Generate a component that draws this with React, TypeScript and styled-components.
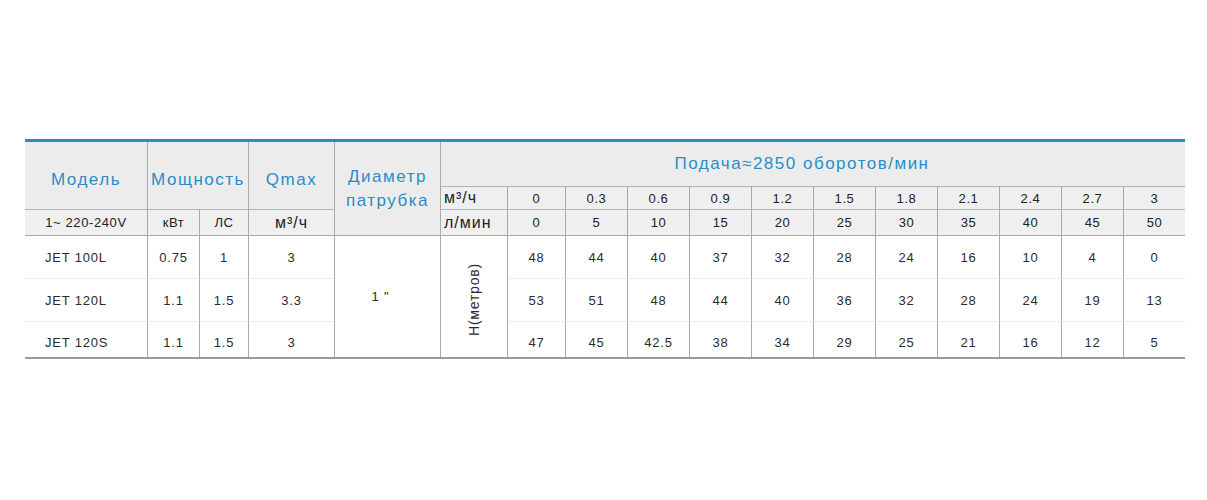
import styled, { createGlobalStyle } from "styled-components"

const GlobalStyle = createGlobalStyle`
  html, body {
    margin: 0;
    padding: 0;
    background: #ffffff;
  }
  body {
    font-family: "Liberation Sans", Arial, sans-serif;
  }
`

const flowM3 = ["0", "0.3", "0.6", "0.9", "1.2", "1.5", "1.8", "2.1", "2.4", "2.7", "3"]
const flowL = ["0", "5", "10", "15", "20", "25", "30", "35", "40", "45", "50"]

const pumps = [
  { model: "JET 100L", kw: "0.75", hp: "1", qmax: "3", head: ["48", "44", "40", "37", "32", "28", "24", "16", "10", "4", "0"] },
  { model: "JET 120L", kw: "1.1", hp: "1.5", qmax: "3.3", head: ["53", "51", "48", "44", "40", "36", "32", "28", "24", "19", "13"] },
  { model: "JET 120S", kw: "1.1", hp: "1.5", qmax: "3", head: ["47", "45", "42.5", "38", "34", "29", "25", "21", "16", "12", "5"] },
]

const App = () => {
  return (
    <Page>
      <GlobalStyle />
      <Table>
        {/* header block */}
        <HeadCell $col="1" $row="1 / 3" $first $pad>Модель</HeadCell>
        <HeadCell $col="2 / 4" $row="1 / 3" $pad>Мощность</HeadCell>
        <HeadCell $col="4" $row="1 / 3" $pad>Qmax</HeadCell>
        <HeadCell $col="5" $row="1 / 4">
          <span>Диаметр<br />патрубка</span>
        </HeadCell>
        <FlowTitle $col="6 / 18" $row="1">Подача≈2850 оборотов/мин</FlowTitle>

        <SubCell $col="6" $row="2" $left>м³/ч</SubCell>
        {flowM3.map((v, i) => (
          <SubCell key={"m" + i} $col={String(7 + i)} $row="2" $small>{v}</SubCell>
        ))}

        <SubCell $col="1" $row="3" $first $small>1~ 220-240V</SubCell>
        <SubCell $col="2" $row="3" $small>кВт</SubCell>
        <SubCell $col="3" $row="3" $small>ЛС</SubCell>
        <SubCell $col="4" $row="3">м³/ч</SubCell>
        <SubCell $col="6" $row="3" $left>л/мин</SubCell>
        {flowL.map((v, i) => (
          <SubCell key={"l" + i} $col={String(7 + i)} $row="3" $small>{v}</SubCell>
        ))}

        {/* body */}
        {pumps.map((p, r) => {
          const row = String(4 + r)
          return [
            <BodyCell key={"a" + r} $col="1" $row={row} $first $model $top={r}>{p.model}</BodyCell>,
            <BodyCell key={"b" + r} $col="2" $row={row} $top={r}>{p.kw}</BodyCell>,
            <BodyCell key={"c" + r} $col="3" $row={row} $top={r}>{p.hp}</BodyCell>,
            <BodyCell key={"d" + r} $col="4" $row={row} $top={r}>{p.qmax}</BodyCell>,
            ...p.head.map((h, i) => (
              <BodyCell key={"h" + r + "-" + i} $col={String(7 + i)} $row={row} $top={r}>{h}</BodyCell>
            )),
          ]
        })}
        <BodyCell $col="5" $row="4 / 7" $top={0}>
          <Inch>1 "</Inch>
        </BodyCell>
        <BodyCell $col="6" $row="4 / 7" $top={0}>
          <Vertical>H(метров)</Vertical>
        </BodyCell>
      </Table>
    </Page>
  )
}

const Page = styled.div`
  padding: 139px 22px 0 25px;
`

const Table = styled.div`
  display: grid;
  width: 1160px;
  grid-template-columns: 122px 52px 49px 86px 106px 67px 58px repeat(10, 62px);
  grid-template-rows: 44px 23px 26px 43px 43px 36px;
  border-top: 3px solid #2b8cc3;
  border-bottom: 2px solid #9a9a9a;
`

interface CellProps {
  $col: string
  $row: string
  $first?: boolean
}

const Cell = styled.div<CellProps>`
  grid-column: ${(p) => p.$col};
  grid-row: ${(p) => p.$row};
  box-sizing: border-box;
  display: flex;
  align-items: center;
  justify-content: center;
  border-left: ${(p) => (p.$first ? "none" : "1px solid #a9a9a9")};
  white-space: nowrap;
`

const HeadCell = styled(Cell)<{ $pad?: boolean }>`
  background: #ececec;
  color: #2a8ccb;
  font-size: 17px;
  letter-spacing: 1.5px;
  line-height: 24px;
  text-align: center;
  padding-top: ${(p) => (p.$pad ? "8px" : "0")};
`

const FlowTitle = styled(HeadCell)`
  padding-right: 22px;
`

const SubCell = styled(Cell)<{ $left?: boolean; $small?: boolean }>`
  background: #efefef;
  border-top: 1px solid #b4b4b4;
  color: #222;
  font-size: ${(p) => (p.$small ? "13px" : "16px")};
  letter-spacing: ${(p) => (p.$small ? "0.6px" : "1px")};
  justify-content: ${(p) => (p.$left ? "flex-start" : "center")};
  padding-left: ${(p) => (p.$left ? "3px" : "0")};
`

const BodyCell = styled(Cell)<{ $model?: boolean; $top: number }>`
  background: #ffffff;
  border-top: 1px solid ${(p) => (p.$top === 0 ? "#a9a9a9" : "#ececec")};
  color: #2b2b2b;
  font-size: 13px;
  letter-spacing: 0.8px;
  justify-content: ${(p) => (p.$model ? "flex-start" : "center")};
  padding-left: ${(p) => (p.$model ? "20px" : "0")};
  padding-top: ${(p) => (p.$top === 2 ? "5px" : "0")};
`

const Inch = styled.span`
  padding-right: 14px;
`

const Vertical = styled.span`
  writing-mode: vertical-rl;
  transform: rotate(180deg);
  font-size: 14px;
  letter-spacing: 0.8px;
  color: #2b2b2b;
  margin-top: 6px;
`

export default App
